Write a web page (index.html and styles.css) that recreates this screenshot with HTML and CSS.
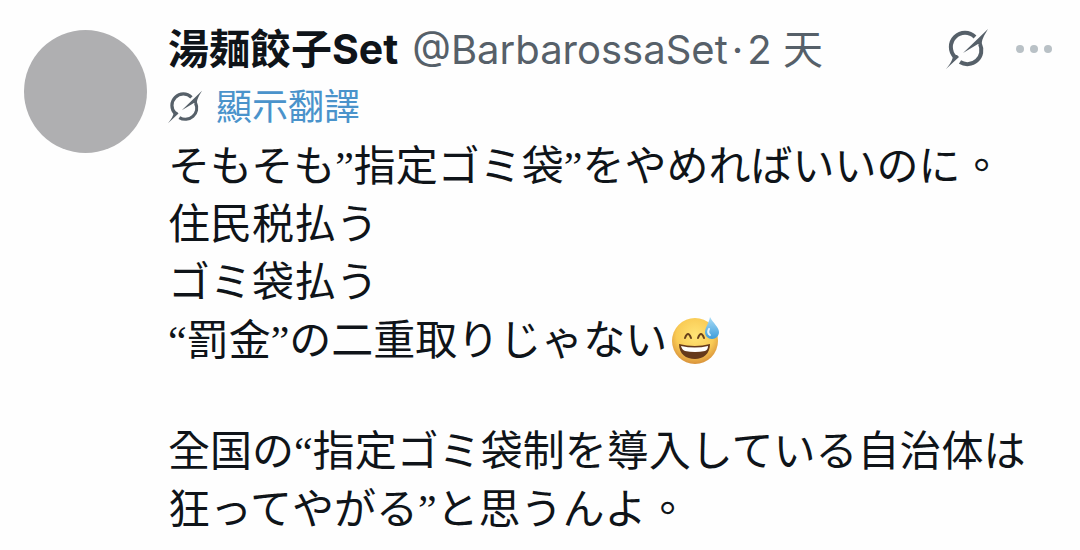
FILE: index.html
```html
<!DOCTYPE html>
<html lang="zh-Hant">
<head>
  <meta charset="UTF-8">
  <meta name="viewport" content="width=device-width, initial-scale=1.0">
  <title>湯麺餃子Set</title>
  <link rel="stylesheet" href="styles.css">
</head>
<body>
  <article class="post">
    <div class="avatar"></div>

    <div class="content">
      <header class="post-header">
        <span class="name">湯麺餃子Set</span>
        <span class="meta">@BarbarossaSet</span>
        <span class="dot">·</span>
        <span class="meta">2 天</span>
        <div class="actions">
          <button type="button" class="icon-btn" aria-label="Grok">
            <svg class="grok" viewBox="0 0 42 42">
              <path class="ring" d="M29 9 A14 14 0 0 0 9 29"/>
              <path class="ring" d="M14 34 A14 14 0 0 0 34 16"/>
              <path d="M42 1 L17 25 L32 16 L36 18 C35 12 38 8 42 1 Z"/>
              <path d="M0 41 L13 29 L11 27 L7 27 C7 32 4 36 0 41 Z"/>
            </svg>
          </button>
          <button type="button" class="icon-btn" aria-label="更多">
            <svg class="more" viewBox="0 0 36 8">
              <circle cx="4" cy="4" r="4"/>
              <circle cx="18" cy="4" r="4"/>
              <circle cx="32" cy="4" r="4"/>
            </svg>
          </button>
        </div>
      </header>

      <a class="translate" href="#">
        <svg class="grok grok-small" viewBox="0 0 42 42">
          <path class="ring" d="M29 9 A14 14 0 0 0 9 29"/>
          <path class="ring" d="M14 34 A14 14 0 0 0 34 16"/>
          <path d="M42 1 L17 25 L32 16 L36 18 C35 12 38 8 42 1 Z"/>
          <path d="M0 41 L13 29 L11 27 L7 27 C7 32 4 36 0 41 Z"/>
        </svg>
        <span>顯示翻譯</span>
      </a>

      <div class="text">
        <p>そもそも”指定ゴミ袋”をやめればいいのに。<br>
        住民税払う<br>
        ゴミ袋払う<br>
        “罰金”の二重取りじゃない<svg class="emoji" viewBox="0 0 48 48" role="img" aria-label="冷や汗">
          <defs>
            <radialGradient id="face" cx="50%" cy="38%" r="62%">
              <stop offset="0" stop-color="#ffe476"/>
              <stop offset="0.65" stop-color="#f9cb55"/>
              <stop offset="1" stop-color="#d9923a"/>
            </radialGradient>
            <linearGradient id="drop" x1="0" y1="0" x2="0" y2="1">
              <stop offset="0" stop-color="#a9dcf6"/>
              <stop offset="1" stop-color="#3e9ddb"/>
            </linearGradient>
          </defs>
          <circle cx="24" cy="25" r="23" fill="url(#face)"/>
          <path d="M14 22 Q17 14 20 22 M27 22 Q30 14 33 22" fill="none" stroke="#67401a" stroke-width="2" stroke-linecap="round"/>
          <path d="M8 28 Q24 32 39 28 C39 38 32 43 24 43 C15 43 8 38 8 28 Z" fill="#65391b"/>
          <path d="M10 30 Q24 33 37 30 Q37 34 34 35 Q24 37 14 35 Q11 34 10 30 Z" fill="#fff"/>
          <path d="M39 1 C38 7 34 12 34 16 C34 20 37 23 41 23 C45 23 48 20 48 16 C48 11 42 7 39 1 Z" fill="url(#drop)"/>
          <path d="M38 13 Q36 17 39 19" fill="none" stroke="#e3f5fd" stroke-width="2" stroke-linecap="round"/>
        </svg></p>
        <p>全国の“指定ゴミ袋制を導入している自治体は<br>
        狂ってやがる”と思うんよ。</p>
      </div>
    </div>
  </article>
</body>
</html>
```
FILE: styles.css
```css
body {
  margin: 0;
  background-color: #fefefe;
  color: #0f1419;
  font-family: Inter, "Noto Sans CJK TC", sans-serif;
}

.post {
  display: flex;
  gap: 21px;
  padding: 20px 28px 0 24px;
}

.avatar {
  flex: none;
  width: 123px;
  height: 123px;
  margin-top: 10px;
  border-radius: 50%;
  background-color: #afafb1;
}

.content {
  flex: 1;
  min-width: 0;
}

.post-header {
  display: flex;
  align-items: baseline;
  height: 58px;
  font-size: 41px;
  line-height: 58px;
  white-space: nowrap;
}

.name {
  margin-right: 14px;
  font-weight: 700;
}

.meta,
.dot {
  color: #566069;
  font-size: 40px;
}

.dot {
  margin: 0 4px;
}

.actions {
  display: flex;
  align-items: center;
  align-self: center;
  gap: 28px;
  margin-left: auto;
}

.icon-btn {
  display: flex;
  padding: 0;
  border: 0;
  background: none;
  cursor: pointer;
}

.grok {
  width: 42px;
  height: 42px;
  fill: #566069;
}

.ring {
  fill: none;
  stroke: #566069;
  stroke-width: 4;
}

.grok-small {
  width: 34px;
  height: 34px;
}

.more {
  width: 36px;
  height: 8px;
  fill: #b9c1c6;
}

.translate {
  display: flex;
  align-items: center;
  gap: 14px;
  height: 58px;
  color: #4a93cb;
  font-size: 36px;
  line-height: 58px;
  text-decoration: none;
}

/* Texto del post */
.text {
  padding-top: 2px;
  font-family: "Liberation Serif", "Noto Sans CJK TC", sans-serif;
  font-size: 42px;
  line-height: 58px;
}

.text p {
  margin: 0;
}

.text p + p {
  margin-top: 53px;
}

.emoji {
  width: 48px;
  height: 48px;
  margin-left: 4px;
  vertical-align: -9px;
}
```
